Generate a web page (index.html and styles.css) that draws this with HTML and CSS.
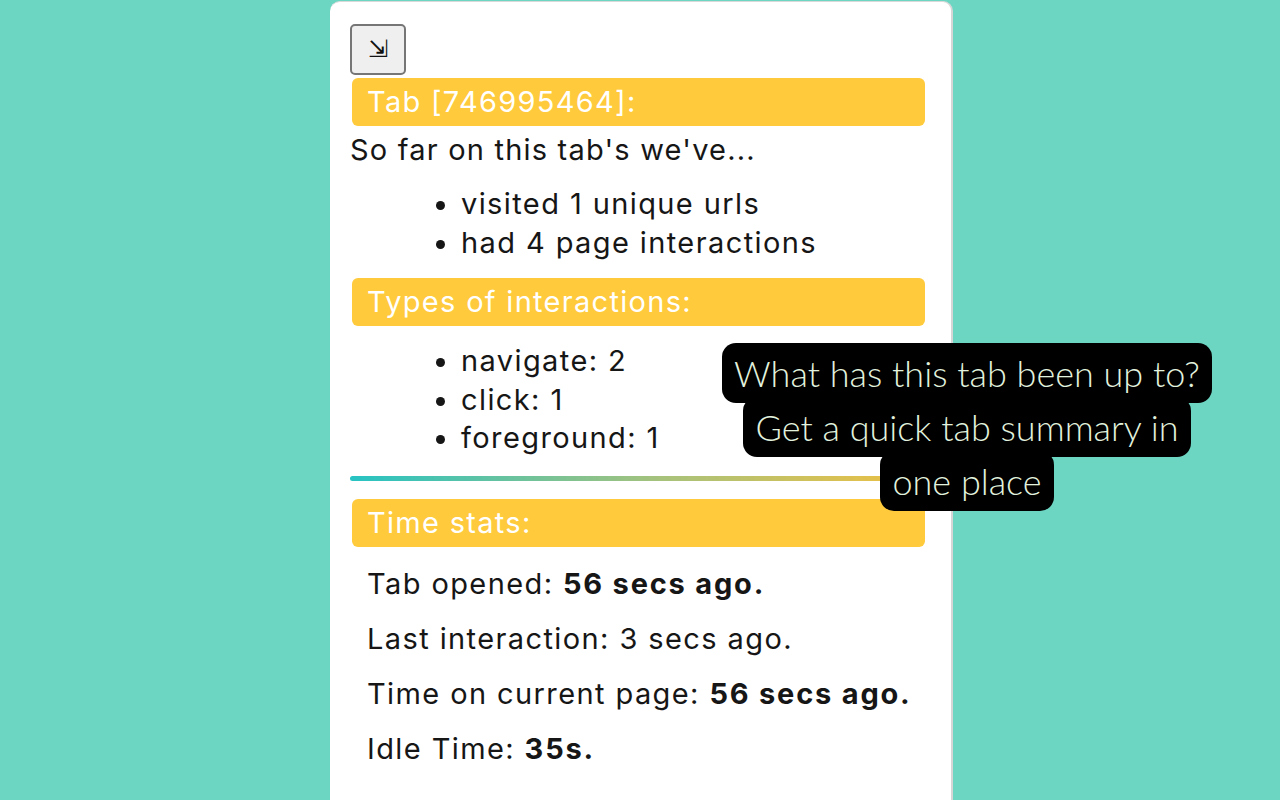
FILE: index.html
```html
<!DOCTYPE html>
<html>
<head>
<meta charset="utf-8">
<link rel="stylesheet" href="styles.css">
</head>
<body>
<div class="stage">
  <div class="panel">
    <button class="toggle" type="button">⇲</button>
    <div class="bar">Tab [746995464]:</div>
    <p class="intro">So far on this tab's we've...</p>
    <ul class="list">
      <li>visited 1 unique urls</li>
      <li>had 4 page interactions</li>
    </ul>
    <div class="bar bar-2">Types of interactions:</div>
    <ul class="list list-2">
      <li>navigate: 2</li>
      <li>click: 1</li>
      <li>foreground: 1</li>
    </ul>
    <div class="divider"></div>
    <div class="bar bar-3">Time stats:</div>
    <div class="stats">
      <div class="stat">Tab opened: <b>56 secs ago.</b></div>
      <div class="stat">Last interaction: 3 secs ago.</div>
      <div class="stat">Time on current page: <b>56 secs ago.</b></div>
      <div class="stat">Idle Time: <b>35s.</b></div>
    </div>
  </div>
  <div class="callout"><span>What has this tab been up to?<br>Get a quick tab summary in<br>one place</span></div>
</div>
</body>
</html>
```
FILE: styles.css
```css
html, body {
  margin: 0;
  padding: 0;
}
body {
  background: #6dd6c3;
  width: 1280px;
  height: 800px;
  overflow: hidden;
  font-family: Inter, "Noto Sans", sans-serif;
  color: #161616;
}
.stage {
  position: relative;
  width: 1280px;
  height: 800px;
  display: flex;
  justify-content: flex-start;
}
.panel {
  margin-left: 330px;
  margin-top: 1px;
  width: 623px;
  height: 799px;
  box-sizing: border-box;
  background: #fff;
  border-radius: 10px 10px 0 0;
  border-top: 1px solid #d9d9d9;
  border-right: 2px solid #d6d6d6;
  padding: 22px 24px 0 20px;
}
.toggle {
  display: flex;
  align-items: center;
  justify-content: center;
  width: 56px;
  height: 51px;
  padding: 0 0 2px 0;
  background: #efefef;
  border: 2px solid #767676;
  border-radius: 5px;
  font-family: "DejaVu Sans", sans-serif;
  font-size: 24px;
  color: #111;
}
.bar {
  margin: 3px 2px 0 2px;
  height: 48px;
  line-height: 48px;
  background: #ffca3b;
  border-radius: 6px;
  color: #fff;
  font-size: 29px;
  letter-spacing: 1.3px;
  padding-left: 15px;
}
.intro {
  margin: 4px 0 0 0;
  font-size: 29px;
  letter-spacing: 1.2px;
  line-height: 40px;
}
.list {
  margin: 15px 0 0 0;
  padding-left: 111px;
  font-size: 29px;
  letter-spacing: 1.4px;
  line-height: 38.5px;
}
.bar-2 {
  margin-top: 16px;
}
.list-2 {
  margin-top: 16px;
}
.divider {
  margin-top: 18px;
  height: 5px;
  border-radius: 3px;
  background: linear-gradient(90deg, #27c3c3 0%, #a9c27a 55%, #f0c041 100%);
}
.bar-3 {
  margin-top: 18px;
}
.stats {
  margin-top: 9px;
  padding-left: 17px;
  font-size: 29px;
  letter-spacing: 1.4px;
}
.stat {
  line-height: 55px;
}
.stat b {
  font-weight: 700;
  letter-spacing: 1.8px;
}
.callout {
  position: absolute;
  left: 667px;
  top: 346px;
  width: 600px;
  text-align: center;
  font-family: Lato, sans-serif;
  font-weight: 300;
  font-size: 36px;
  line-height: 54px;
  color: #e2f2de;
}
.callout span {
  background: #000;
  padding: 8px 12px;
  border-radius: 14px;
  -webkit-box-decoration-break: clone;
  box-decoration-break: clone;
}
```
